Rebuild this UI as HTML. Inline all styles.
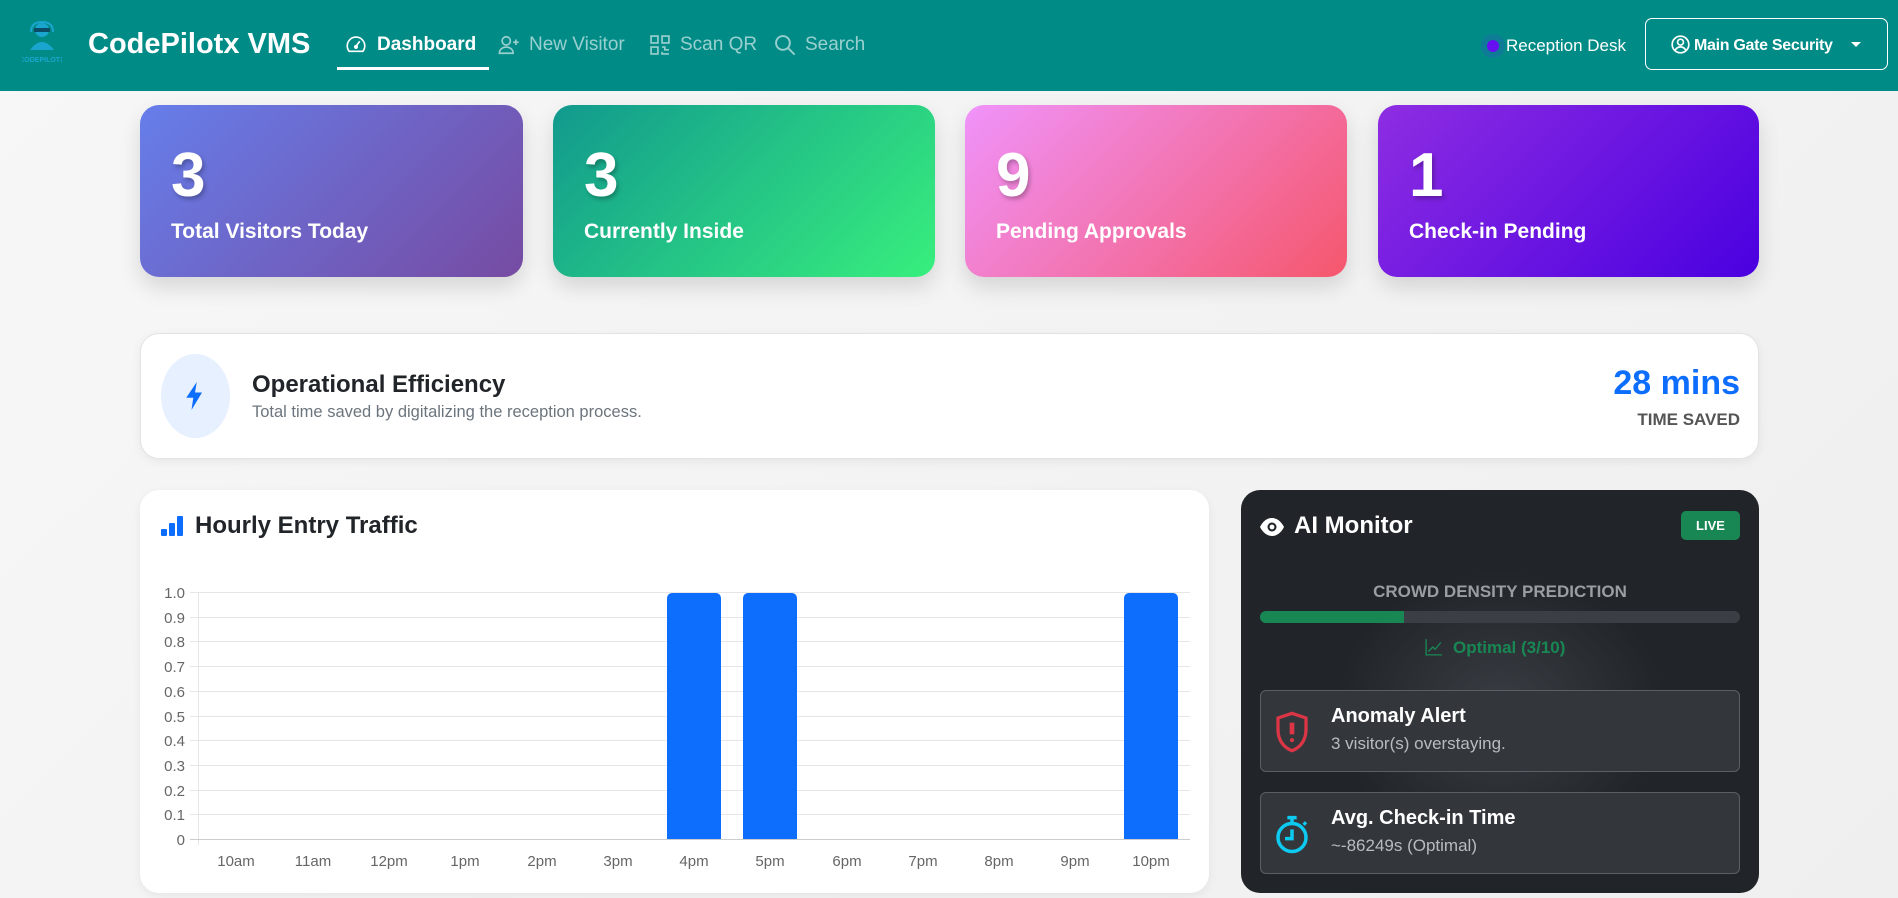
<!DOCTYPE html>
<html><head><meta charset="utf-8"><style>
*{box-sizing:border-box;margin:0;padding:0}
body{width:1898px;height:898px;overflow:hidden;background:linear-gradient(135deg,#f7f7f7,#efefef);font-family:"Liberation Sans",sans-serif;position:relative}
.a{position:absolute}
.nav{left:0;top:0;width:1898px;height:91px;background:#008b87}
.nl{position:absolute;top:33px;font-size:19px;color:rgba(255,255,255,.6);line-height:24px;white-space:nowrap}
.card{position:absolute;top:105px;height:172px;border-radius:19px;box-shadow:0 10px 22px rgba(0,0,0,.13);color:#fff}
.card .n{position:absolute;left:31px;top:40px;font-size:62px;font-weight:bold;line-height:1;text-shadow:2px 3px 4px rgba(0,0,0,.25)}
.card .l{position:absolute;left:31px;top:114px;font-size:21px;font-weight:bold;line-height:26px}
.box{position:absolute;left:1260px;width:480px;height:82px;border:1px solid #5a5f66;border-radius:6px;background:#33373c}
.box .t{position:absolute;left:70px;top:14px;color:#fff;font-weight:bold;font-size:20px}
.box .s{position:absolute;left:70px;top:43px;color:#b8bcc0;font-size:17px}
</style></head><body>
<div class="a nav"></div>
<svg class="a" style="left:22px;top:20px" width="40" height="46" viewBox="0 0 40 46"><circle cx="20" cy="10" r="7" fill="#1aa5cf"/><rect x="12" y="8" width="16" height="4" fill="#0b4d66"/><path d="M8 30 Q20 14 32 30 Z" fill="#1aa5cf"/><path d="M9 12 Q9 2 20 2 Q31 2 31 12" stroke="#1aa5cf" stroke-width="2" fill="none"/><text x="20" y="42" font-size="7" fill="#1aa5cf" text-anchor="middle" font-family="Liberation Sans" font-weight="bold">CODEPILOTX</text></svg>
<div class="a" style="left:88px;top:26px;font-size:29px;font-weight:bold;color:#fff;line-height:36px">CodePilotx VMS</div>
<svg class="a" style="left:345px;top:35px" width="22" height="20" viewBox="0 0 16 16" fill="none" stroke="#fff" stroke-width="1.3"><path d="M2.5 13A7 7 0 1 1 13.5 13Z"/><path d="M8 9 L11 5"/><circle cx="8" cy="9.5" r="1" fill="#fff"/></svg>
<div class="nl" style="left:377px;color:#fff;font-weight:bold">Dashboard</div>
<div class="a" style="left:337px;top:67px;width:152px;height:3px;background:#fff"></div>
<svg class="a" style="left:498px;top:34px" width="22" height="22" viewBox="0 0 16 16" fill="none" stroke="rgba(255,255,255,.6)" stroke-width="1.2"><circle cx="6" cy="5" r="3"/><path d="M1 14c0-3 2.5-4.5 5-4.5s5 1.5 5 4.5Z"/><path d="M13 4v4M11 6h4"/></svg>
<div class="nl" style="left:529px">New Visitor</div>
<svg class="a" style="left:649px;top:34px" width="22" height="22" viewBox="0 0 16 16" fill="none" stroke="rgba(255,255,255,.6)" stroke-width="1.2"><rect x="1.5" y="1.5" width="5" height="5"/><rect x="9.5" y="1.5" width="5" height="5"/><rect x="1.5" y="9.5" width="5" height="5"/><path d="M9.5 9.5h2v2h3M9.5 13v1.5h5"/></svg>
<div class="nl" style="left:680px">Scan QR</div>
<svg class="a" style="left:774px;top:34px" width="22" height="22" viewBox="0 0 16 16" fill="none" stroke="rgba(255,255,255,.6)" stroke-width="1.4"><circle cx="6.5" cy="6.5" r="5"/><path d="M10.5 10.5L15 15"/></svg>
<div class="nl" style="left:805px">Search</div>
<div class="a" style="left:1481px;top:34px;width:24px;height:24px;border-radius:50%;background:rgba(60,80,200,.25)"></div>
<div class="a" style="left:1487px;top:40px;width:12px;height:12px;border-radius:50%;background:#6610f2"></div>
<div class="nl" style="left:1506px;color:#fff;font-size:17px;top:34px">Reception Desk</div>
<div class="a" style="left:1645px;top:18px;width:243px;height:52px;border:1px solid #fff;border-radius:7px"></div>
<svg class="a" style="left:1671px;top:35px" width="19" height="19" viewBox="0 0 16 16" fill="none" stroke="#fff" stroke-width="1.4"><circle cx="8" cy="8" r="7"/><circle cx="8" cy="6" r="2.5"/><path d="M3.5 13c1-2 2.5-3 4.5-3s3.5 1 4.5 3"/></svg>
<div class="nl" style="left:1694px;color:#fff;font-weight:bold;font-size:16px;letter-spacing:-0.3px;top:34px">Main Gate Security</div>
<div class="a" style="left:1851px;top:42px;width:0;height:0;border-left:5px solid transparent;border-right:5px solid transparent;border-top:5px solid #fff"></div>

<div class="card" style="left:140px;width:383px;background:linear-gradient(135deg,#667eea,#764ba2)"><div class="n">3</div><div class="l">Total Visitors Today</div></div>
<div class="card" style="left:553px;width:382px;background:linear-gradient(135deg,#11998e,#38ef7d)"><div class="n">3</div><div class="l">Currently Inside</div></div>
<div class="card" style="left:965px;width:382px;background:linear-gradient(135deg,#f093fb,#f5576c)"><div class="n">9</div><div class="l">Pending Approvals</div></div>
<div class="card" style="left:1378px;width:381px;background:linear-gradient(135deg,#8e2de2,#4a00e0)"><div class="n">1</div><div class="l">Check-in Pending</div></div>

<div class="a" style="left:140px;top:333px;width:1619px;height:126px;background:#fff;border:1px solid #e3e3e3;border-radius:19px;box-shadow:0 3px 10px rgba(0,0,0,.06)"></div>
<div class="a" style="left:161px;top:354px;width:69px;height:84px;border-radius:50%;background:#e7f0ff"></div>
<svg class="a" style="left:185px;top:382px" width="20" height="28" viewBox="0 0 10 16"><path d="M6 0L0 9h4l-1 7 6-10H5z" fill="#0d6efd"/></svg>
<div class="a" style="left:252px;top:371px;font-size:24px;font-weight:bold;color:#212529">Operational Efficiency</div>
<div class="a" style="left:252px;top:403px;font-size:16.5px;color:#6c757d">Total time saved by digitalizing the reception process.</div>
<div class="a" style="right:158px;top:364px;font-size:34px;font-weight:bold;color:#0d6efd">28 mins</div>
<div class="a" style="right:158px;top:410px;font-size:17px;font-weight:bold;color:#555">TIME SAVED</div>

<div class="a" style="left:140px;top:490px;width:1069px;height:403px;background:#fff;border-radius:19px;box-shadow:0 3px 10px rgba(0,0,0,.06)"></div>
<svg class="a" style="left:161px;top:515px" width="22" height="22" viewBox="0 0 22 22" fill="#0d6efd"><rect x="0" y="14" width="6" height="7" rx="1"/><rect x="8" y="8" width="6" height="13" rx="1"/><rect x="16" y="1" width="6" height="20" rx="1"/></svg>
<div class="a" style="left:195px;top:512px;font-size:24px;font-weight:bold;color:#212529">Hourly Entry Traffic</div>
<svg class="a" style="left:0;top:0" width="1240" height="898" font-family="Liberation Sans" font-size="15" fill="#666">
<g stroke="#e6e6e6" stroke-width="1">
<line x1="190" x2="1190" y1="592.5" y2="592.5"/><line x1="190" x2="1190" y1="617.5" y2="617.5"/><line x1="190" x2="1190" y1="641.5" y2="641.5"/><line x1="190" x2="1190" y1="666.5" y2="666.5"/><line x1="190" x2="1190" y1="691.5" y2="691.5"/><line x1="190" x2="1190" y1="716.5" y2="716.5"/><line x1="190" x2="1190" y1="740.5" y2="740.5"/><line x1="190" x2="1190" y1="765.5" y2="765.5"/><line x1="190" x2="1190" y1="790.5" y2="790.5"/><line x1="190" x2="1190" y1="814.5" y2="814.5"/>
<line x1="198.5" x2="198.5" y1="592" y2="845"/>
</g>
<line x1="190" x2="1190" y1="839.5" y2="839.5" stroke="#ccc"/>
<g text-anchor="end"><text x="185" y="598">1.0</text><text x="185" y="623">0.9</text><text x="185" y="647">0.8</text><text x="185" y="672">0.7</text><text x="185" y="697">0.6</text><text x="185" y="722">0.5</text><text x="185" y="746">0.4</text><text x="185" y="771">0.3</text><text x="185" y="796">0.2</text><text x="185" y="820">0.1</text><text x="185" y="845">0</text></g>
<g text-anchor="middle"><text x="236" y="866">10am</text><text x="313" y="866">11am</text><text x="389" y="866">12pm</text><text x="465" y="866">1pm</text><text x="542" y="866">2pm</text><text x="618" y="866">3pm</text><text x="694" y="866">4pm</text><text x="770" y="866">5pm</text><text x="847" y="866">6pm</text><text x="923" y="866">7pm</text><text x="999" y="866">8pm</text><text x="1075" y="866">9pm</text><text x="1151" y="866">10pm</text></g>
<g fill="#0d6efd"><path d="M667 839V598a5 5 0 0 1 5-5h44a5 5 0 0 1 5 5V839Z"/><path d="M743 839V598a5 5 0 0 1 5-5h44a5 5 0 0 1 5 5V839Z"/><path d="M1124 839V598a5 5 0 0 1 5-5h44a5 5 0 0 1 5 5V839Z"/></g>
</svg>

<div class="a" style="left:1241px;top:490px;width:518px;height:403px;border-radius:19px;background:radial-gradient(ellipse at 50% 55%,#3a3e44 0%,#212529 45%)"></div>
<svg class="a" style="left:1260px;top:517px" width="24" height="20" viewBox="0 0 16 12"><path d="M0 6C2 2 5 0 8 0s6 2 8 6c-2 4-5 6-8 6S2 10 0 6Z" fill="#fff"/><circle cx="8" cy="6" r="3" fill="#212529"/><circle cx="8" cy="6" r="1.6" fill="#fff"/></svg>
<div class="a" style="left:1294px;top:512px;font-size:24px;font-weight:bold;color:#fff">AI Monitor</div>
<div class="a" style="left:1681px;top:511px;width:59px;height:29px;border-radius:5px;background:#198754;color:#fff;font-size:13px;font-weight:bold;text-align:center;line-height:29px">LIVE</div>
<div class="a" style="left:1241px;top:582px;width:518px;text-align:center;font-size:17px;font-weight:bold;color:#9a9ea3">CROWD DENSITY PREDICTION</div>
<div class="a" style="left:1260px;top:611px;width:480px;height:12px;border-radius:6px;background:#3b3f45;overflow:hidden"><div style="width:144px;height:12px;background:#198754"></div></div>
<svg class="a" style="left:1425px;top:638px" width="18" height="18" viewBox="0 0 16 16" fill="none" stroke="#198754" stroke-width="1.2"><path d="M1 1v14h14"/><path d="M3 12l4-4 2 2 5-6"/></svg>
<div class="a" style="left:1453px;top:638px;font-size:17px;font-weight:bold;color:#198754">Optimal (3/10)</div>
<div class="box" style="top:690px"><svg class="a" style="left:12px;top:20px" width="38" height="42" viewBox="0 0 16 18" fill="none" stroke="#dc3545" stroke-width="1.4"><path d="M8 1L2 3v5c0 5 3 8 6 9 3-1 6-4 6-9V3Z"/><path d="M8 5v5" stroke-width="2"/><circle cx="8" cy="12.5" r=".9" fill="#dc3545" stroke="none"/></svg><div class="t">Anomaly Alert</div><div class="s">3 visitor(s) overstaying.</div></div>
<div class="box" style="top:792px"><svg class="a" style="left:12px;top:20px" width="38" height="42" viewBox="0 0 16 18" fill="none" stroke="#0dcaf0" stroke-width="1.5"><circle cx="8" cy="10.5" r="6"/><path d="M6 2h4M8 2v2.5M8 7v4H5M13 4l1 1"/></svg><div class="t">Avg. Check-in Time</div><div class="s">~-86249s (Optimal)</div></div>
</body></html>
